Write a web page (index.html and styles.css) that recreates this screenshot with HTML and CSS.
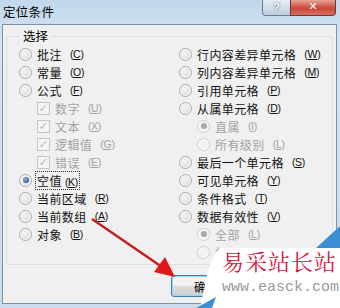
FILE: index.html
```html
<!DOCTYPE html>
<html lang="zh-CN">
<head>
  <meta charset="UTF-8" />
  <title>定位条件</title>
  <link rel="stylesheet" href="styles.css">
</head>
<body>
  <div class="dialog">
    <div class="titlebar">
      <span class="title">定位条件</span>
      <span class="btn-help">?</span>
      <span class="btn-close">✕</span>
    </div>

    <div class="panel">
      <fieldset class="group">
        <legend>选择</legend>
        <div class="cols">
          <div class="col">
            <div class="opt"><span class="radio"></span>批注 <span class="key">(<u>C</u>)</span></div>
            <div class="opt"><span class="radio"></span>常量 <span class="key">(<u>O</u>)</span></div>
            <div class="opt"><span class="radio"></span>公式 <span class="key">(<u>F</u>)</span></div>
            <div class="opt sub off"><span class="check">✓</span>数字 <span class="key">(<u>U</u>)</span></div>
            <div class="opt sub off"><span class="check">✓</span>文本 <span class="key">(<u>X</u>)</span></div>
            <div class="opt sub off"><span class="check">✓</span>逻辑值 <span class="key">(<u>G</u>)</span></div>
            <div class="opt sub off"><span class="check">✓</span>错误 <span class="key">(<u>E</u>)</span></div>
            <div class="opt"><span class="radio on"></span><span class="focus">空值 <span class="key">(<u>K</u>)</span></span></div>
            <div class="opt"><span class="radio"></span>当前区域 <span class="key">(<u>R</u>)</span></div>
            <div class="opt"><span class="radio"></span>当前数组 <span class="key">(<u>A</u>)</span></div>
            <div class="opt"><span class="radio"></span>对象 <span class="key">(<u>B</u>)</span></div>
          </div>
          <div class="col">
            <div class="opt"><span class="radio"></span>行内容差异单元格 <span class="key">(<u>W</u>)</span></div>
            <div class="opt"><span class="radio"></span>列内容差异单元格 <span class="key">(<u>M</u>)</span></div>
            <div class="opt"><span class="radio"></span>引用单元格 <span class="key">(<u>P</u>)</span></div>
            <div class="opt"><span class="radio"></span>从属单元格 <span class="key">(<u>D</u>)</span></div>
            <div class="opt sub off"><span class="radio on"></span>直属 <span class="key">(<u>I</u>)</span></div>
            <div class="opt sub off"><span class="radio"></span>所有级别 <span class="key">(<u>L</u>)</span></div>
            <div class="opt"><span class="radio"></span>最后一个单元格 <span class="key">(<u>S</u>)</span></div>
            <div class="opt"><span class="radio"></span>可见单元格 <span class="key">(<u>Y</u>)</span></div>
            <div class="opt"><span class="radio"></span>条件格式 <span class="key">(<u>T</u>)</span></div>
            <div class="opt"><span class="radio"></span>数据有效性 <span class="key">(<u>V</u>)</span></div>
            <div class="opt sub off"><span class="radio on"></span>全部 <span class="key">(<u>L</u>)</span></div>
            <!-- 被水印挡住的部分裁掉 -->
            <div class="opt sub off cut"><span class="radio"></span>相</div>
          </div>
        </div>
      </fieldset>

      <div class="footer">
        <div class="btn-clip">
          <button class="btn">确</button>
        </div>
      </div>
    </div>
  </div>

  <!-- 标注箭头和水印 -->
  <svg class="overlay" width="340" height="308" viewBox="0 0 340 308">
    <line x1="92" y1="219" x2="162" y2="267" stroke="#c42020" stroke-width="2.5" />
    <polygon points="175,277 154,272 165,257" fill="#e01818" />
    <path d="M220,248 L316,248 L340,226 L340,308 L200,308 L204,290 Q208,262 220,248 Z" fill="#ffffff" />
    <polygon points="316,248 340,226 340,248" fill="#3d8fd3" />
    <polygon points="196,308 216,297 212,308" fill="#3d8fd3" />
  </svg>
  <div class="mark">
    <div class="mark-cn">易采站长站</div>
    <div class="mark-url">www.easck.com</div>
  </div>
</body>
</html>
```

FILE: styles.css
```css
body {
  margin: 0;
  width: 340px;
  height: 308px;
  overflow: hidden;
  background: #c9dcef;
  font-family: "Noto Sans CJK SC", "Liberation Sans", sans-serif;
  font-size: 12px;
  color: #111;
}

.dialog {
  width: 340px;
  height: 308px;
  background: linear-gradient(#c2d7ec, #d3e3f3 40px, #cadcee);
}

.titlebar {
  height: 24px;
  display: flex;
  align-items: flex-start;
}

.title {
  padding: 4px 0 0 3px;
  font-size: 12.5px;
  letter-spacing: 0.3px;
  line-height: 16px;
  color: #000;
}

.btn-help {
  margin-left: auto;
  width: 27px;
  height: 15px;
  border: 1px solid #6d7d8f;
  border-top: none;
  border-right: none;
  border-radius: 0 0 0 4px;
  background: linear-gradient(#e6eef7, #bccde0);
  color: #fff;
  font: bold 11px "Liberation Sans", sans-serif;
  text-shadow: 0 0 2px #334;
  text-align: center;
  line-height: 14px;
}

.btn-close {
  width: 44px;
  height: 15px;
  margin-right: 4px;
  border: 1px solid #6d3a36;
  border-top: none;
  border-radius: 0 0 4px 0;
  background: linear-gradient(#e8a495, #c9463a 55%, #d9705e);
  color: #fff;
  font: bold 11px "DejaVu Sans", sans-serif;
  text-align: center;
  line-height: 14px;
}

.panel {
  margin: 0 3px 0 2px;
  height: 278px;
  border: 1px solid #7f90a3;
  background: #f0f0f0;
  display: flex;
  flex-direction: column;
}

.group {
  margin: 4px 3px 0 3px;
  padding: 2px 0 0 12px;
  height: 232px;
  border: 1px solid #d8dfe5;
  border-radius: 3px;
}

.group legend {
  margin-left: 1px;
  padding: 0 3px;
  font-size: 12.5px;
  line-height: 14px;
  color: #000;
}

.cols {
  display: grid;
  grid-template-columns: 160px 1fr;
}

.opt {
  height: 18px;
  display: flex;
  align-items: center;
  gap: 5px;
  white-space: pre;
  letter-spacing: 0.4px;
}

.opt.sub {
  padding-left: 18px;
}

.opt.cut {
  width: 22px;
  overflow: hidden;
}

.off {
  color: #a3a3a3;
}

.key {
  font: 10.5px "Liberation Sans", sans-serif;
  letter-spacing: -0.3px;
}

.radio {
  width: 11px;
  height: 11px;
  border-radius: 50%;
  border: 1px solid #a9a9a9;
  background: radial-gradient(circle at 40% 40%, #f4f4f4, #d6d6d6);
  box-shadow: inset 0 0 0 1px #fbfbfb;
  flex: none;
  position: relative;
}

.off .radio {
  border-color: #cfcfcf;
  background: #f2f2f2;
}

.radio.on::after {
  content: "";
  position: absolute;
  left: 2.5px;
  top: 2.5px;
  width: 6px;
  height: 6px;
  border-radius: 50%;
  background: radial-gradient(circle at 35% 35%, #8db4de, #1c3d66);
}

.off .radio.on::after {
  background: #a9a9a9;
}

.check {
  width: 11px;
  height: 11px;
  border: 1px solid #c6c6c6;
  background: #f4f4f4;
  flex: none;
  color: #b8b8b8;
  font: bold 11px "DejaVu Sans", sans-serif;
  line-height: 11px;
  text-align: center;
}

.focus {
  outline: 1px dotted #333;
  outline-offset: 0;
  padding: 0 1px;
  margin-left: -1px;
}

.footer {
  padding: 10px 0 0 168px;
}

.btn-clip {
  width: 36px;
  height: 22px;
  overflow: hidden;
}

.btn {
  width: 72px;
  height: 22px;
  border: 1px solid #3c7fb1;
  border-radius: 3px;
  background: linear-gradient(#f2f2f2 50%, #dddddd 50%, #cfcfcf);
  box-shadow: inset 0 0 0 1px #9fd6f5;
  font-family: "Noto Sans CJK SC", sans-serif;
  font-size: 12px;
  text-align: left;
  padding: 0 0 0 22px;
}

.overlay {
  position: absolute;
  left: 0;
  top: 0;
}

.mark {
  position: absolute;
  left: 222px;
  top: 247px;
}

.mark-cn {
  font-family: "Noto Serif CJK SC", "Noto Sans CJK SC", serif;
  font-size: 22px;
  line-height: 28px;
  letter-spacing: 1px;
  color: #d2163e;
}

.mark-url {
  margin-top: 5px;
  font: 15px "Liberation Mono", monospace;
  line-height: 16px;
  color: #9a9a9a;
}
```
